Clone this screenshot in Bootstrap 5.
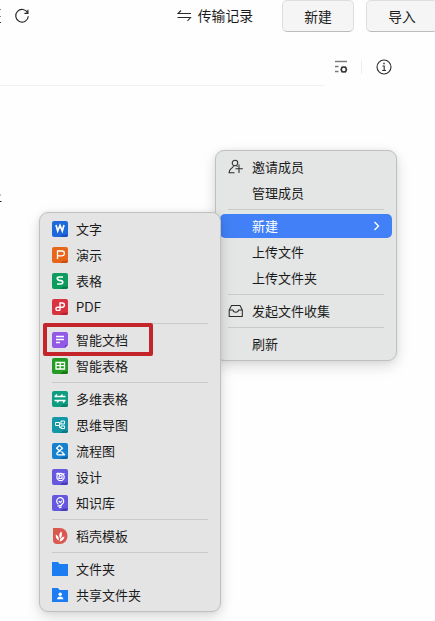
<!DOCTYPE html>
<html lang="zh-CN">
<head>
<meta charset="utf-8">
<meta name="viewport" content="width=device-width, initial-scale=1">
<title>文件</title>
<link href="https://cdn.jsdelivr.net/npm/bootstrap@5.3.0/dist/css/bootstrap.min.css" rel="stylesheet">
<style>
body{width:435px;height:621px;font-family:"Inter","Noto Sans CJK SC",sans-serif;color:#1b1b1b;background:#fefefe}
svg{display:block;flex:none}
.topbar{height:32px;font-size:13.8px;line-height:32px;margin-right:-3px}
.edge-mark{width:3px;height:16px;margin-top:8px;color:#555}
.refresh{margin:8px 0 0 11px}
.transfer{margin-right:29px;gap:6px}
.btn-mac{width:72px;height:32px;padding:1px 0 0;line-height:30px;font-size:13.8px;background:#f5f5f5;border:1px solid #dedede;border-bottom-color:#bcbcbc;border-radius:5px;color:#1b1b1b;flex:none}
.btn-wide{margin-left:12px}
.toolbar{height:53px;padding:17px 43px 0 0}
.toolbar-line{width:324px;height:1px;background:#f1f1f1}
.tool-sep{width:1px;height:14px;background:#eee;margin:0 14px 0 12px}
.row-mark{left:0;top:194px}
.ctx-menu{background:#e4e6e5;border:1px solid #bfc1c0;border-radius:9px;padding:3px 4px;font-size:13px;box-shadow:0 5px 14px rgba(0,0,0,.15),0 0 5px rgba(0,0,0,.06)}
.menu-main{left:215px;top:150px;width:182px;height:211px}
.menu-sub{left:39px;top:212px;width:182px;height:400px;background:#e4e4e4}
.item{height:26px;line-height:26px;padding-left:8px}
.item .ic{width:24px;flex:none}
.split{height:1px;background:#c9caca;margin:3px 8px}
.split-first{margin-bottom:4px}
.item.active-item{height:24px;line-height:24px;margin:1px 0;background:#4180f6;color:#fff;border-radius:5px;padding-right:12px}
.focus-box{left:43px;top:323px;width:110px;height:33px;border:4px solid #c3252b;border-radius:2px}
</style>
<script src="https://cdn.jsdelivr.net/npm/bootstrap@5.3.0/dist/js/bootstrap.bundle.min.js"></script>
</head>
<body class="position-relative overflow-hidden m-0">
<header class="topbar d-flex align-items-start">
  <svg class="edge-mark" viewBox="0 0 3 16" fill="none" stroke="#888"><path d="M0 1.5h1M0 8.5h1"/><path stroke="#333" d="M0 14.500h1"/></svg>
  <svg class="refresh" width="16" height="16" viewBox="0 0 16 16" fill="none" stroke="#2b2b2b" stroke-width="1.2"><path d="M13.700 5A6.300 6.300 0 1 0 14.300 8.200M13.900 1.800V5.300H10.400"/></svg>
  <div class="transfer d-flex align-items-center ms-auto"><svg width="15" height="14" viewBox="0 0 15 14" fill="none" stroke="#2b2b2b" stroke-width="1.100"><path d="M4 1.500L1 4.500H14M.5 8.500H13.500L10.500 12"/></svg><span>传输记录</span></div>
  <button class="btn btn-mac">新建</button>
  <button class="btn btn-mac btn-wide">导入</button>
</header>
<div class="toolbar d-flex align-items-center justify-content-end">
  <svg width="15" height="16" viewBox="0 0 15 16" fill="none"><path d="M1 2.500h12" stroke="#777" stroke-width="1.400"/><path d="M1 7.500h3.500M1 12.500h3.500" stroke="#777" stroke-width="1.400"/><circle cx="9.800" cy="10.500" r="2.500" stroke="#333" stroke-width="1.500"/><path d="M6.500 10.500h1M12.200 10.500h1M8 7.500l.6 1M11.600 7.500l-.6 1M8 13.500l.6-1M11.600 13.500l-.6-1" stroke="#333"/></svg>
  <div class="tool-sep"></div>
  <svg width="16" height="16" viewBox="0 0 16 16" fill="none" stroke="#2b2b2b" stroke-width="1.100"><circle cx="8" cy="8" r="7"/><path d="M6.500 7H8.200V11.500M6.200 11.500H10"/><path d="M7.300 4.500H8.700" stroke-width="1.400"/></svg>
</div>
<div class="toolbar-line"></div>
<svg class="row-mark position-absolute" width="2" height="9" viewBox="0 0 2 9"><path d="M0 1h1" stroke="#888"/><path d="M0 7.500h1.500" stroke="#222"/></svg>

<div class="ctx-menu menu-main position-absolute">
  <div class="item d-flex align-items-center"><div class="ic"><svg width="16" height="16" viewBox="0 0 16 16" fill="none" stroke="#2b2b2b" stroke-width="1.050"><circle cx="7" cy="4" r="2.800"/><path d="M5.300 6.500C6 8 4.500 8.500 3.500 9.200 2 10.500 1.200 12 1 13.800H6.500M8.500 6.500L9.500 7.800M11 5.500V14M7.500 9.800H14.800"/></svg></div><span>邀请成员</span></div>
  <div class="item d-flex align-items-center"><div class="ic"></div><span>管理成员</span></div>
  <div class="split split-first"></div>
  <div class="item active-item d-flex align-items-center"><div class="ic"></div><span>新建</span><svg class="ms-auto" width="7" height="10" viewBox="0 0 7 10" fill="none" stroke="#fff" stroke-width="1.400"><path d="M1.500 1L5.500 5L1.500 9"/></svg></div>
  <div class="item d-flex align-items-center"><div class="ic"></div><span>上传文件</span></div>
  <div class="item d-flex align-items-center"><div class="ic"></div><span>上传文件夹</span></div>
  <div class="split"></div>
  <div class="item d-flex align-items-center"><div class="ic"><svg width="16" height="14" viewBox="0 0 16 14" fill="none" stroke="#2b2b2b" stroke-width="1.050" stroke-linejoin="round"><path d="M3.500 1.500H12L14.300 6V12.500H1.200V6ZM1.200 6H5C5.300 9 10.200 9 10.500 6H14.300"/></svg></div><span>发起文件收集</span></div>
  <div class="split"></div>
  <div class="item d-flex align-items-center"><div class="ic"></div><span>刷新</span></div>
</div>

<div class="ctx-menu menu-sub position-absolute">
  <div class="item d-flex align-items-center"><div class="ic"><svg width="16" height="16" viewBox="0 0 16 16"><rect width="16" height="16" rx="2" fill="#1f68dc"/><path d="M8 16l3-2.500h5V14a2 2 0 0 1-2 2z" fill="#1452bd"/><path d="M4 4l1.700 6L8 4.500 10.300 10 12 4" fill="none" stroke="#fff" stroke-width="1.700"/></svg></div><span>文字</span></div>
  <div class="item d-flex align-items-center"><div class="ic"><svg width="16" height="16" viewBox="0 0 16 16"><rect width="16" height="16" rx="2" fill="#e8661b"/><path d="M8 16l3-2.500h5V14a2 2 0 0 1-2 2z" fill="#c94f10"/><path d="M5.500 12V4H10a2.300 2.300 0 0 1 0 4.800H5.500" fill="none" stroke="#fff" stroke-width="1.300"/></svg></div><span>演示</span></div>
  <div class="item d-flex align-items-center"><div class="ic"><svg width="16" height="16" viewBox="0 0 16 16"><rect width="16" height="16" rx="2" fill="#0c9d5e"/><path d="M8 16l3-2.500h5V14a2 2 0 0 1-2 2z" fill="#087d48"/><path d="M11 4H7.300C4.500 4 4.800 7 7 7.300L9 7.600C11.500 8 11.300 11 8.700 11H5" fill="none" stroke="#fff" stroke-width="1.700"/></svg></div><span>表格</span></div>
  <div class="item d-flex align-items-center"><div class="ic"><svg width="16" height="16" viewBox="0 0 16 16"><rect width="16" height="16" rx="2" fill="#d93340"/><path d="M8 16l3-2.500h5V14a2 2 0 0 1-2 2z" fill="#b92431"/><path d="M8 11.500V4H10.300a2 2 0 0 1 0 4.200H5.500a1.600 1.600 0 0 0 0 3.200H8" fill="none" stroke="#fff" stroke-width="1.400"/></svg></div><span>PDF</span></div>
  <div class="split"></div>
  <div class="item d-flex align-items-center"><div class="ic"><svg width="16" height="16" viewBox="0 0 16 16"><path d="M2 0H14a2 2 0 0 1 2 2V13H13V16H2a2 2 0 0 1-2-2V2a2 2 0 0 1 2-2" fill="#9159e6"/><path d="M13 13h3l-3 3z" fill="#6938ba"/><path d="M4 4.500h8M4 7.500h8M4 10.500h4" stroke="#fff" stroke-width="1.500"/></svg></div><span>智能文档</span></div>
  <div class="item d-flex align-items-center"><div class="ic"><svg width="16" height="16" viewBox="0 0 16 16"><rect width="16" height="16" rx="2" fill="#249b24"/><path d="M8 16l3-2.500h5V14a2 2 0 0 1-2 2z" fill="#167516"/><path d="M4 4.500h8.500v6.500H4zM4 7.700h8.500M8.200 4.500V11" fill="none" stroke="#fff" stroke-width="1.300"/></svg></div><span>智能表格</span></div>
  <div class="split"></div>
  <div class="item d-flex align-items-center"><div class="ic"><svg width="16" height="16" viewBox="0 0 16 16"><rect width="16" height="16" rx="2" fill="#0f9d82"/><path d="M8 16l3-2.500h5V14a2 2 0 0 1-2 2z" fill="#0a7d68"/><path d="M2.500 5.500h11M2.500 9.500h11M5 3.500L3 5.500M10.500 3.500l-2 2M7 9.500l-2 2M13 9.500l-2 2" fill="none" stroke="#fff" stroke-width="1.300"/></svg></div><span>多维表格</span></div>
  <div class="item d-flex align-items-center"><div class="ic"><svg width="16" height="16" viewBox="0 0 16 16"><rect width="16" height="16" rx="2" fill="#1397a6"/><path d="M8 16l3-2.500h5V14a2 2 0 0 1-2 2z" fill="#0d7886"/><path d="M3.500 5.500h4v3h-4zM7.500 7H9M12.500 4H9V7H12.500ZM12.500 9H9V11.500H12.500ZM7.500 8.500V10.500H9" fill="none" stroke="#fff" stroke-width="1"/></svg></div><span>思维导图</span></div>
  <div class="item d-flex align-items-center"><div class="ic"><svg width="16" height="16" viewBox="0 0 16 16"><rect width="16" height="16" rx="2" fill="#1680cf"/><path d="M8 16l3-2.500h5V14a2 2 0 0 1-2 2z" fill="#0e63aa"/><path d="M8.500 8.500L4.500 5.200 7.500 2.500 10.500 5.200 5 10C4.500 11 5 11.800 6 11.800H12.500L9.500 8.500" fill="none" stroke="#fff" stroke-width="1.300" stroke-linejoin="round"/></svg></div><span>流程图</span></div>
  <div class="item d-flex align-items-center"><div class="ic"><svg width="16" height="16" viewBox="0 0 16 16"><rect width="16" height="16" rx="2" fill="#6558df"/><path d="M8 16l3-2.500h5V14a2 2 0 0 1-2 2z" fill="#493cb8"/><g fill="none" stroke="#fff" stroke-width="1.200"><circle cx="8.500" cy="8" r="3.700"/><path d="M4 5.500C6 3 7 4.500 8 6.500M12.500 4.500L7 7.500V9.500H10V7"/></g></svg></div><span>设计</span></div>
  <div class="item d-flex align-items-center"><div class="ic"><svg width="16" height="16" viewBox="0 0 16 16"><rect width="16" height="16" rx="2" fill="#6558df"/><path d="M8 16l3-2.500h5V14a2 2 0 0 1-2 2z" fill="#493cb8"/><path d="M6.500 9.200a3.500 3.500 0 1 1 3.700-.2L9 10.200M6.700 6.200L8.500 7.500 10 5.500M5.500 11.200L10 10.300M7 12.700L9.500 12.200" fill="none" stroke="#fff" stroke-width="1.200"/></svg></div><span>知识库</span></div>
  <div class="split"></div>
  <div class="item d-flex align-items-center"><div class="ic"><svg width="16" height="16" viewBox="0 0 16 16"><path d="M1 0H8a7.500 8 0 0 1 0 16H5a4 4 0 0 1-4-4z" fill="#d9584f"/><path d="M8.300 10.500C6.500 7.500 7.500 5 9.300 3.500 10.500 6 10 8.500 8.300 10.500M6.800 12.500C4 11 3.500 8.500 3.800 6.500 6 7.500 7.200 9.500 6.800 12.500M7.500 13.500C8 10.500 10 9 12.500 8.500 12 11.500 10 13.200 7.500 13.500" fill="#fff"/></svg></div><span>稻壳模板</span></div>
  <div class="split"></div>
  <div class="item d-flex align-items-center"><div class="ic"><svg width="16" height="16" viewBox="0 0 16 16"><path d="M0 1H6L7.500 3H16V15H0z" fill="#1c7df2"/></svg></div><span>文件夹</span></div>
  <div class="item d-flex align-items-center"><div class="ic"><svg width="16" height="16" viewBox="0 0 16 16"><path d="M0 1H6L7.500 3H16V15H0z" fill="#1c7df2"/><circle cx="8.200" cy="7.200" r="1.700" fill="#fff"/><path d="M5 12.300C5 8.500 11.400 8.500 11.400 12.300z" fill="#fff"/></svg></div><span>共享文件夹</span></div>
</div>
<div class="focus-box position-absolute"></div>
</body>
</html>
